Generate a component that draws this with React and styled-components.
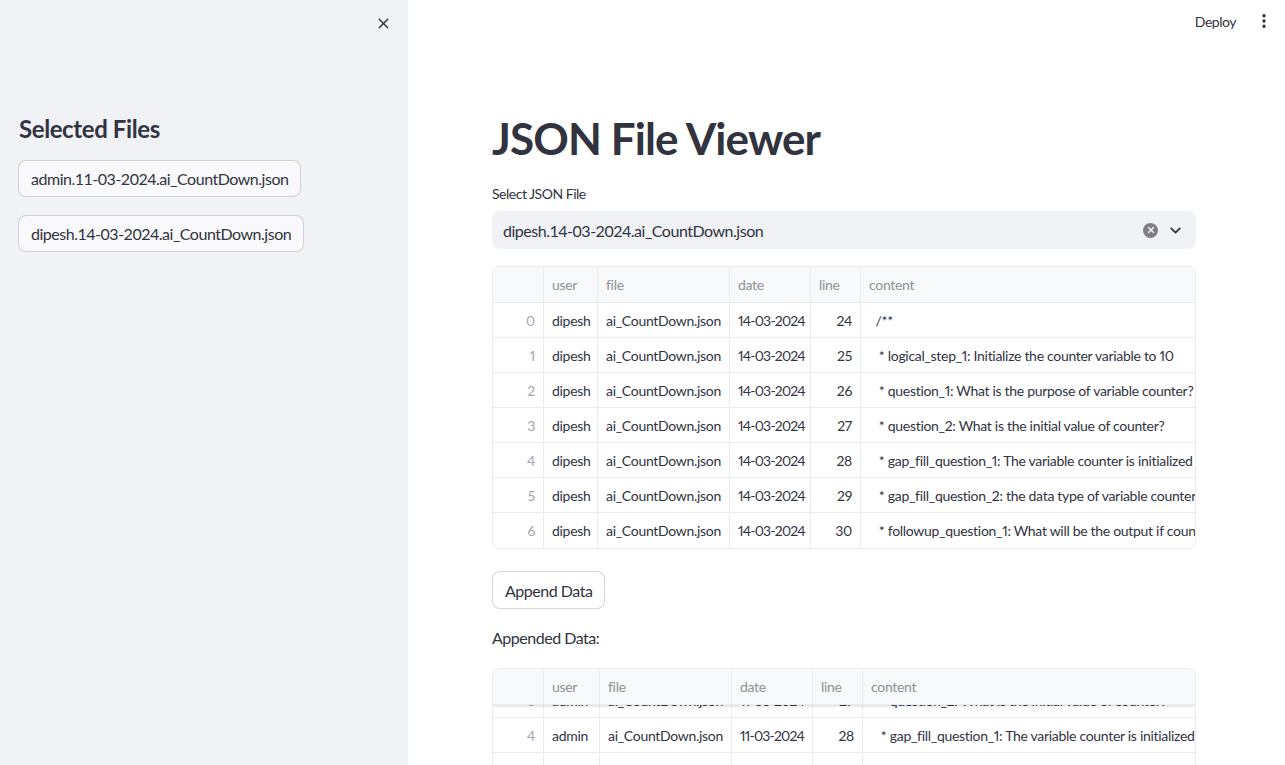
import React from 'react';
import styled, { createGlobalStyle } from 'styled-components';
import { X, MoreVertical, ChevronDown } from 'lucide-react';

const Global = createGlobalStyle`
  html, body { margin: 0; padding: 0; height: 100%; overflow: hidden; }
  body {
    font-family: "Source Sans Pro", Lato, "Noto Sans", sans-serif;
    color: #31333f;
    background: #ffffff;
    letter-spacing: -0.03em;
  }
  * { box-sizing: border-box; }
`;

const Shell = styled.div`
  display: flex;
  width: 100vw;
  height: 100vh;
  overflow: hidden;
`;

const Sidebar = styled.aside`
  width: 408px;
  flex-shrink: 0;
  background: #f0f2f6;
  display: flex;
  flex-direction: column;
  padding: 12px 18px 0 18px;
`;

const SidebarTop = styled.div`
  display: flex;
  justify-content: flex-end;
  height: 22px;
`;

const CloseBtn = styled.button`
  border: 0;
  background: transparent;
  padding: 0;
  width: 22px;
  height: 22px;
  display: flex;
  align-items: center;
  justify-content: center;
  color: #31333f;
  cursor: pointer;
  margin-right: -4px;
`;

const SideHeading = styled.h2`
  margin: 80px 0 16px 1px;
  font-size: 24px;
  font-weight: 700;
  line-height: 30px;
  letter-spacing: -0.4px;
`;

const FileButton = styled.button`
  align-self: flex-start;
  font-family: inherit;
  letter-spacing: inherit;
  font-size: 16px;
  color: #31333f;
  background: #f9f9fb;
  border: 1px solid rgba(49, 51, 63, 0.2);
  border-radius: 8px;
  height: 37px;
  padding: 0 12px;
  margin-bottom: 18px;
  cursor: pointer;
`;

const Main = styled.main`
  flex: 1;
  display: flex;
  flex-direction: column;
  min-width: 0;
`;

const TopBar = styled.header`
  flex-shrink: 0;
  display: flex;
  justify-content: flex-end;
  align-items: center;
  gap: 19px;
  height: 42px;
  padding: 0 12px 0 0;
`;

const DeployBtn = styled.button`
  border: 0;
  background: transparent;
  font-family: inherit;
  letter-spacing: inherit;
  font-size: 14px;
  color: #31333f;
  padding: 0;
  cursor: pointer;
`;

const IconBtn = styled.span`
  display: flex;
  align-items: center;
  color: #31333f;
`;

const Content = styled.div`
  flex-shrink: 0;
  width: 704px;
  margin-left: 84px;
  display: flex;
  flex-direction: column;
`;

const Title = styled.h1`
  margin: 69px 0 0 0;
  font-size: 44px;
  font-weight: 700;
  line-height: 54px;
  letter-spacing: -0.9px;
`;

const Label = styled.label`
  font-size: 14px;
  margin-top: 19px;
  line-height: 20px;
`;

const Select = styled.div`
  margin-top: 7px;
  height: 38px;
  background: #f0f2f6;
  border-radius: 8px;
  display: flex;
  align-items: center;
  padding: 0 12px 0 11px;
  font-size: 16px;
`;

const SelectValue = styled.span`
  flex: 1;
`;

const ClearIcon = styled.span`
  width: 15px;
  height: 15px;
  border-radius: 50%;
  background: #7d7f88;
  display: flex;
  align-items: center;
  justify-content: center;
  margin-right: 9px;
`;

const TableFrame = styled.div`
  margin-top: ${(p) => p.$mt}px;
  border: 1px solid rgba(49, 51, 63, 0.1);
  border-radius: 8px;
  overflow: hidden;
  height: ${(p) => (p.$h ? `${p.$h}px` : 'auto')};
  flex-shrink: 0;
`;

const Row = styled.div`
  display: grid;
  grid-template-columns: ${(p) => p.$cols};
  height: ${(p) => p.$h}px;
  border-bottom: ${(p) => (p.$last ? '0' : '1px solid #ebecee')};
  background: ${(p) => (p.$head ? '#f8f9fb' : '#ffffff')};
`;

const HeadRow = styled(Row)`
  position: relative;
  z-index: 1;
  box-shadow: ${(p) => (p.$shadow ? '0 1px 3px rgba(0,0,0,0.16)' : 'none')};
`;

const Cell = styled.div`
  border-right: 1px solid #ebecee;
  display: flex;
  align-items: center;
  justify-content: ${(p) => (p.$right ? 'flex-end' : 'flex-start')};
  padding: 0 8px;
  font-size: 14px;
  letter-spacing: ${(p) => (p.$num ? '-0.8px' : '-0.3px')};
  font-variant-numeric: proportional-nums;
  white-space: pre;
  overflow: hidden;
  color: ${(p) => (p.$muted ? '#8e9099' : p.$index ? '#a3a6ae' : '#31333f')};
  &:last-child { border-right: 0; }
`;

const Body = styled.div`
  overflow: hidden;
  height: ${(p) => (p.$h ? `${p.$h}px` : 'auto')};
`;

const BodyInner = styled.div`
  margin-top: ${(p) => -p.$offset}px;
`;

const ActionButton = styled.button`
  align-self: flex-start;
  margin-top: 22px;
  height: 38px;
  padding: 0 12px;
  font-family: inherit;
  letter-spacing: inherit;
  font-size: 16px;
  color: #31333f;
  background: #ffffff;
  border: 1px solid rgba(49, 51, 63, 0.2);
  border-radius: 8px;
  cursor: pointer;
`;

const Caption = styled.p`
  margin: 18px 0 0 0;
  font-size: 16px;
  line-height: 22px;
`;

const headers = ['', 'user', 'file', 'date', 'line', 'content'];

const contents = [
  '  /**',
  '   * logical_step_1: Initialize the counter variable to 10',
  '   * question_1: What is the purpose of variable counter?',
  '   * question_2: What is the initial value of counter?',
  '   * gap_fill_question_1: The variable counter is initialized to 10',
  '   * gap_fill_question_2: the data type of variable counter is int',
  '   * followup_question_1: What will be the output if counter is 0?',
];

const rows1 = contents.map((c, i) => ({
  i, user: 'dipesh', file: 'ai_CountDown.json', date: '14-03-2024', line: 24 + i, content: c,
}));

const rows2 = contents.map((c, i) => ({
  i, user: 'admin', file: 'ai_CountDown.json', date: '11-03-2024', line: 24 + i, content: c,
}));

function DataTable({ cols, rows, mt, height, bodyHeight, offset = 0, shadow }) {
  return (
    <TableFrame $mt={mt} $h={height}>
      <HeadRow $cols={cols} $h={36} $head $shadow={shadow}>
        {headers.map((h, k) => (
          <Cell key={k} $muted>{h}</Cell>
        ))}
      </HeadRow>
      <Body $h={bodyHeight}>
        <BodyInner $offset={offset}>
          {rows.map((r, k) => (
            <Row key={r.i} $cols={cols} $h={35} $last={!bodyHeight && k === rows.length - 1}>
              <Cell $right $index>{r.i}</Cell>
              <Cell>{r.user}</Cell>
              <Cell>{r.file}</Cell>
              <Cell $num>{r.date}</Cell>
              <Cell $right>{r.line}</Cell>
              <Cell>{r.content}</Cell>
            </Row>
          ))}
        </BodyInner>
      </Body>
    </TableFrame>
  );
}

export default function App() {
  return (
    <>
      <Global />
      <Shell>
        <Sidebar>
          <SidebarTop>
            <CloseBtn aria-label="Close sidebar">
              <X size={17} strokeWidth={2} />
            </CloseBtn>
          </SidebarTop>
          <SideHeading>Selected Files</SideHeading>
          <FileButton>admin.11-03-2024.ai_CountDown.json</FileButton>
          <FileButton>dipesh.14-03-2024.ai_CountDown.json</FileButton>
        </Sidebar>
        <Main>
          <TopBar>
            <DeployBtn>Deploy</DeployBtn>
            <IconBtn>
              <MoreVertical size={18} strokeWidth={2.5} />
            </IconBtn>
          </TopBar>
          <Content>
            <Title>JSON File Viewer</Title>
            <Label>Select JSON File</Label>
            <Select>
              <SelectValue>dipesh.14-03-2024.ai_CountDown.json</SelectValue>
              <ClearIcon>
                <X size={10} color="#ffffff" strokeWidth={3} />
              </ClearIcon>
              <ChevronDown size={17} strokeWidth={2.5} color="#31333f" />
            </Select>
            <DataTable
              cols="51px 54px 132px 81px 50px 1fr"
              rows={rows1}
              mt={17}
            />
            <ActionButton>Append Data</ActionButton>
            <Caption>Appended Data:</Caption>
            <DataTable
              cols="51px 56px 132px 81px 50px 1fr"
              rows={rows2.slice(3)}
              mt={19}
              height={140}
              bodyHeight={110}
              offset={22}
              shadow
            />
          </Content>
        </Main>
      </Shell>
    </>
  );
}
